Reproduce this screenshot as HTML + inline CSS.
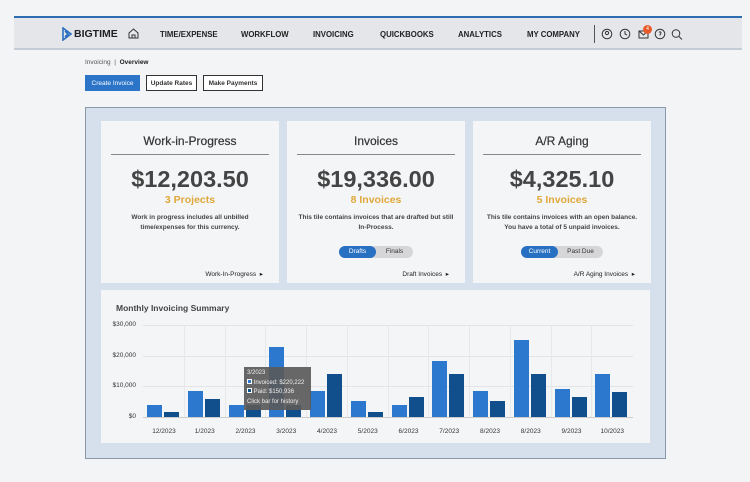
<!DOCTYPE html><html><head><style>
*{margin:0;padding:0;box-sizing:border-box}
body{width:750px;height:482px;background:#f3f4f6;font-family:"Liberation Sans",sans-serif;position:relative;overflow:hidden;color:#333}
.a{position:absolute}
.nav{left:14px;top:16px;width:728px;height:34px;background:#e4e6ea;border-top:2px solid #2f6db3;border-bottom:2px solid #c4ccd6}
.ni{top:30px;font-size:7.8px;font-weight:bold;color:#222}
.btn{top:75px;height:16px;font-size:6.5px;font-weight:bold;display:flex;align-items:center;justify-content:center;border:1px solid #333;background:#fff}
.panel{left:85px;top:107px;width:581px;height:352px;background:#d6e0ec;border:1px solid #8a98aa}
.card{background:#f4f5f7;top:121px;width:178px;height:162px;text-align:center}
.card h2{font-size:12px;font-weight:normal;color:#333;margin-top:13px;-webkit-text-stroke:.2px #333}
.card hr{border:0;border-top:1.5px solid #888;margin:6px 10px 0}
.card .big{font-size:23.5px;font-weight:bold;color:#444;margin-top:11px}
.card .sub{font-size:10.5px;font-weight:bold;color:#e0a83a;margin-top:1px}
.card .d{font-size:6.5px;font-weight:bold;color:#444;margin-top:7px;line-height:10px;padding:0 28px}
.card .lk{position:absolute;right:16px;bottom:5px;font-size:6.5px;color:#222}
.tog{position:absolute;left:52px;top:125px;width:74px;height:12px;border-radius:6px;background:#d6d6d8;font-size:6.5px}
.tog span{position:absolute;top:0;height:12px;line-height:12px;width:37px;text-align:center}
.tog .on{left:0;background:#2770c2;color:#fff;border-radius:6px}
.gl{height:1px;background:#e2e4e8;left:143px;width:490px}
.vl{width:1px;background:#e6e8ec;top:325px;height:92px}
.l{background:#2c78cf}.dk{background:#114f8c}
.yl{font-size:6.5px;color:#333;right:614px}
.xl{font-size:6.5px;color:#333;top:428px;width:40px;text-align:center}
</style></head><body>
<div class="a nav"></div>
<svg class="a" style="left:62px;top:27px" width="10" height="14" viewBox="0 0 10 14"><path d="M1 1 L9 7 L1 13 Z M3 4 L6 7 L3 10" fill="none" stroke="#2a6fc0" stroke-width="1.6"/></svg>
<div class="a" style="left:74px;top:28px;font-size:10.5px;font-weight:bold;color:#222">BIGTIME</div>
<svg class="a" style="left:128px;top:28px" width="11" height="11" viewBox="0 0 11 11"><path d="M1 5 L5.5 1 L10 5 V10 H1 Z M4 10 V7 H7 V10" fill="none" stroke="#333" stroke-width="1"/></svg>
<div class="a ni" style="left:160px">TIME/EXPENSE</div>
<div class="a ni" style="left:241px">WORKFLOW</div>
<div class="a ni" style="left:313px">INVOICING</div>
<div class="a ni" style="left:380px">QUICKBOOKS</div>
<div class="a ni" style="left:458px">ANALYTICS</div>
<div class="a ni" style="left:527px">MY COMPANY</div>
<div class="a" style="left:594px;top:25px;width:1px;height:18px;background:#555"></div>
<svg class="a" style="left:601px;top:28px" width="84" height="12" viewBox="0 0 84 12"><g fill="none" stroke="#333" stroke-width="1"><circle cx="6" cy="6" r="4.8"/><circle cx="6" cy="5" r="1.6"/><circle cx="24" cy="6" r="4.8"/><path d="M24 3V6L26 7"/><rect x="38" y="3" width="9" height="7"/><path d="M38 3L42.5 7L47 3"/><circle cx="59" cy="6" r="4.8"/><path d="M58 4.5Q59 3 60 4.5Q60 6 59 6.5V7.5"/><circle cx="75" cy="5.5" r="3.8"/><path d="M78 8.5L81 11.5"/></g></svg>
<div class="a" style="left:643px;top:25px;width:9px;height:9px;border-radius:50%;background:#e85a2a;color:#fff;font-size:5px;text-align:center;line-height:9px">4</div>
<div class="a" style="left:85px;top:59px;font-size:6.5px;color:#555">Invoicing &nbsp;| &nbsp;<b style="color:#222">Overview</b></div>
<div class="a btn" style="left:85px;width:55px;background:#2b74c8;color:#fff;border-color:#2b74c8;font-weight:normal">Create Invoice</div>
<div class="a btn" style="left:146px;width:51px">Update Rates</div>
<div class="a btn" style="left:203px;width:60px">Make Payments</div>
<div class="a panel"></div>
<div class="a card" style="left:101px"><h2>Work-in-Progress</h2><hr><div class="big">$12,203.50</div><div class="sub">3 Projects</div><div class="d">Work in progress includes all unbilled time/expenses for this currency.</div><div class="lk">Work-In-Progress &nbsp;▸</div></div>
<div class="a card" style="left:287px"><h2>Invoices</h2><hr><div class="big">$19,336.00</div><div class="sub">8 Invoices</div><div class="d" style="padding:0 8px">This tile contains invoices that are drafted but still In-Process.</div><div class="tog"><span class="on">Drafts</span><span style="left:37px">Finals</span></div><div class="lk">Draft Invoices &nbsp;▸</div></div>
<div class="a card" style="left:473px"><h2>A/R Aging</h2><hr><div class="big">$4,325.10</div><div class="sub">5 Invoices</div><div class="d" style="padding:0 8px">This tile contains invoices with an open balance. You have a total of 5 unpaid invoices.</div><div class="tog" style="left:48px;width:82px"><span class="on">Current</span><span style="left:41px">Past Due</span></div><div class="lk">A/R Aging Invoices &nbsp;▸</div></div>
<div class="a" style="left:101px;top:290px;width:549px;height:153px;background:#f4f5f7"></div>
<div class="a" style="left:116px;top:303px;font-size:8.5px;font-weight:bold;color:#444">Monthly Invoicing Summary</div>
<div class="a gl" style="top:325px"></div><div class="a gl" style="top:356px"></div><div class="a gl" style="top:386px"></div><div class="a gl" style="top:417px;background:#ccc"></div>
<div class="a yl" style="top:321px">$30,000</div><div class="a yl" style="top:352px">$20,000</div><div class="a yl" style="top:382px">$10,000</div><div class="a yl" style="top:413px">$0</div>
<div id="c"></div>
<div class="a" style="left:244px;top:367px;width:67px;height:43px;background:rgba(90,90,90,.92);color:#eee;font-size:6px;line-height:9.5px;padding:2px 3px;white-space:nowrap">3/2023<br><span style="display:inline-block;width:5px;height:5px;background:#2c78cf;border:.5px solid #fff"></span> Invoiced: $220,222<br><span style="display:inline-block;width:5px;height:5px;background:#114f8c;border:.5px solid #fff"></span> Paid: $150,936<br>Click bar for history</div>
<script>
var L=[12,26,12,70,26,16,12,56,26,77,28,43],D=[5,18,12,12,43,5,20,43,16,43,20,25],X=["12/2023","1/2023","2/2023","3/2023","4/2023","5/2023","6/2023","7/2023","8/2023","8/2023","9/2023","10/2023"],h="";
for(var i=0;i<12;i++){var s=143+i*40.75;
if(i>0)h+='<div class="a vl" style="left:'+s+'px"></div>';
h+='<div class="a l" style="left:'+(s+4)+'px;top:'+(417-L[i])+'px;width:15px;height:'+L[i]+'px"></div>';
h+='<div class="a dk" style="left:'+(s+21)+'px;top:'+(417-D[i])+'px;width:15px;height:'+D[i]+'px"></div>';
h+='<div class="a xl" style="left:'+(s+1)+'px">'+X[i]+'</div>';}
document.getElementById("c").innerHTML=h;
</script>
</body></html>
